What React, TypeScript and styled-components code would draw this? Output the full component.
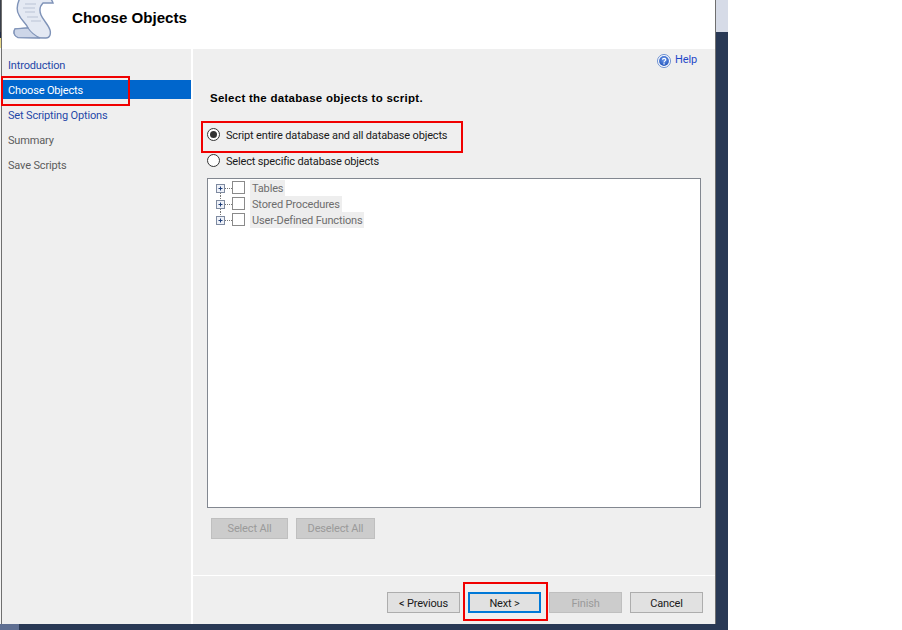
import styled, { createGlobalStyle } from 'styled-components';

const GlobalStyle = createGlobalStyle`
  html, body {
    margin: 0;
    padding: 0;
    background: #ffffff;
  }
  body {
    font-family: Roboto, 'Liberation Sans', Arial, sans-serif;
    font-size: 11px;
    letter-spacing: -0.16px;
    overflow: hidden;
  }
`;

const Desktop = styled.div`
  position: relative;
  width: 728px;
  height: 630px;
  display: flex;
  flex-direction: column;
  background: #293955;
`;

const Upper = styled.div`
  display: flex;
  height: 624px;
`;

const LeftSliver = styled.div`
  width: 1px;
  background: linear-gradient(#3a3f4a 0 32px, #1f2a44 32px 38px, #e8d98a 38px 48px, #f4f4f4 48px);
`;

const RightStrip = styled.div`
  width: 12px;
  display: flex;
  flex-direction: column;
`;

const RightStripTop = styled.div`
  height: 32px;
  background: #d6dbe7;
`;

const BottomStrip = styled.div`
  height: 6px;
  display: flex;
`;

const BottomStripLeft = styled.div`
  width: 19px;
  background: #5f6f92;
`;

const Window = styled.div`
  width: 714px;
  display: flex;
  flex-direction: column;
  border-left: 1px solid #6f6f6f;
  border-right: 1px solid #6f6f6f;
  background: #efefef;
`;

const Header = styled.header`
  height: 49px;
  flex: none;
  display: flex;
  align-items: flex-start;
  background: #ffffff;
  overflow: hidden;
`;

const ScrollIcon = styled.svg`
  width: 44px;
  height: 42px;
  margin-left: 10px;
  flex: none;
`;

const Title = styled.h1`
  margin: 9px 0 0 16px;
  font-family: 'Liberation Sans', Arial, sans-serif;
  font-size: 15.1px;
  line-height: 18px;
  font-weight: 700;
  letter-spacing: 0;
  color: #000000;
`;

const Body = styled.div`
  flex: 1;
  display: flex;
  min-height: 0;
`;

const Sidebar = styled.nav`
  width: 189px;
  flex: none;
  display: flex;
  flex-direction: column;
  gap: 6px;
  padding-top: 6px;
  border-right: 2px solid #ffffff;
`;

const NavItem = styled.div<{ $state: 'link' | 'active' | 'muted' }>`
  height: 19px;
  line-height: 21px;
  padding-left: 6px;
  background: ${(p) => (p.$state === 'active' ? '#0066cc' : 'transparent')};
  color: ${(p) =>
    p.$state === 'active' ? '#ffffff' : p.$state === 'link' ? '#1f48a8' : '#5c5c5c'};
`;

const Main = styled.main`
  flex: 1;
  display: flex;
  flex-direction: column;
  min-width: 0;
`;

const Content = styled.section`
  height: 527px;
  flex: none;
  display: flex;
  flex-direction: column;
  padding-left: 14px;
  box-sizing: border-box;
  border-bottom: 1px solid #ffffff;
`;

const HelpRow = styled.div`
  height: 18px;
  padding-right: 18px;
  display: flex;
  justify-content: flex-end;
  align-items: flex-end;
  gap: 4px;
  line-height: 14px;
  color: #1f48c8;
`;

const HelpIcon = styled.svg`
  width: 14px;
  height: 14px;
  margin-bottom: -1px;
`;

const Heading = styled.h2`
  margin: 24px 0 0 3px;
  height: 14px;
  font-family: 'Liberation Sans', Arial, sans-serif;
  font-size: 11.5px;
  line-height: 14px;
  font-weight: 700;
  letter-spacing: 0.27px;
  color: #000000;
`;

const RadioRow = styled.label<{ $top: number }>`
  display: flex;
  align-items: center;
  gap: 6px;
  height: 14px;
  margin-top: ${(p) => p.$top}px;
  color: #1a1a1a;
`;

const Radio = styled.span<{ $checked?: boolean }>`
  width: 13px;
  height: 13px;
  margin-top: -1px;
  flex: none;
  border-radius: 50%;
  box-sizing: border-box;
  border: 1px solid #333333;
  background: #ffffff;
  display: flex;
  align-items: center;
  justify-content: center;
  &::after {
    content: '';
    width: 7px;
    height: 7px;
    border-radius: 50%;
    background: ${(p) => (p.$checked ? '#333333' : 'transparent')};
  }
`;

const TreeBox = styled.div`
  width: 494px;
  height: 330px;
  margin-top: 10px;
  box-sizing: border-box;
  padding-top: 1px;
  border: 1px solid #828790;
  background: #ffffff;
  display: flex;
  flex-direction: column;
`;

const TreeRow = styled.div`
  height: 16px;
  display: flex;
  align-items: center;
`;

const TreeGlyph = styled.svg`
  width: 17px;
  height: 16px;
  margin-left: 7px;
  flex: none;
`;

const Check = styled.span`
  width: 13px;
  height: 13px;
  margin-top: -1px;
  flex: none;
  box-sizing: border-box;
  border: 1px solid #8a8a8a;
  background: #ffffff;
`;

const TreeLabel = styled.span`
  height: 16px;
  line-height: 18px;
  margin-left: 5px;
  padding: 0 2px;
  background: #eeeeee;
  color: #6d6d6d;
`;

const SelectBar = styled.div`
  display: flex;
  gap: 8px;
  margin: 10px 0 0 4px;
`;

const Button = styled.button<{ $width: number; $focused?: boolean }>`
  width: ${(p) => p.$width}px;
  height: 21px;
  padding: 0;
  box-sizing: border-box;
  font-family: inherit;
  font-size: 11px;
  letter-spacing: -0.16px;
  color: #1a1a1a;
  background: #e1e1e1;
  border: ${(p) => (p.$focused ? '2px solid #0078d7' : '1px solid #adadad')};
  &:disabled {
    color: #9a9a9a;
    background: #cccccc;
    border-color: #bfbfbf;
  }
`;

const Footer = styled.footer`
  flex: 1;
  display: flex;
  justify-content: flex-end;
  gap: 8px;
  padding: 16px 12px 0 0;
  button {
    padding-top: 1px;
  }
`;

const Callout = styled.div<{ $x: number; $y: number; $w: number; $h: number }>`
  position: absolute;
  left: ${(p) => p.$x}px;
  top: ${(p) => p.$y}px;
  width: ${(p) => p.$w}px;
  height: ${(p) => p.$h}px;
  box-sizing: border-box;
  border: 2px solid #f00000;
  pointer-events: none;
`;

const NAV: { label: string; state: 'link' | 'active' | 'muted' }[] = [
  { label: 'Introduction', state: 'link' },
  { label: 'Choose Objects', state: 'active' },
  { label: 'Set Scripting Options', state: 'link' },
  { label: 'Summary', state: 'muted' },
  { label: 'Save Scripts', state: 'muted' },
];

const TREE = ['Tables', 'Stored Procedures', 'User-Defined Functions'];

const Scroll = () => (
  <ScrollIcon viewBox="12 0 44 42">
    <path
      d="M20 -2 C17 4 16 10 19 15 C21 20 26 23 28 28 L15 29 C13 32 14 36 18 37.5 L46 38 C50 38 51 34 50 30 C48 24 43 20 41 15 C39 10 40 6 43 3 L53 3 C52 0 50 -2 50 -2 Z"
      fill="#e4e9f3"
      stroke="#7f93b8"
      strokeWidth="1.4"
    />
    <path
      d="M15 29 L28 28 C30 31 33 35 40 37.8 L18 37.5 C14 36 13 32 15 29 Z"
      fill="#cdd6e8"
      stroke="#7f93b8"
      strokeWidth="1.2"
    />
    <path d="M25 4 H36 M23 8 H35 M25 12 H35 M27 17 H38 M31 21 H41" stroke="#b9c3d6" strokeWidth="1.2" fill="none" />
  </ScrollIcon>
);

const Help = () => (
  <HelpIcon viewBox="0 0 14 14">
    <defs>
      <radialGradient id="helpBall" cx="0.5" cy="0.35" r="0.7">
        <stop offset="0" stopColor="#6f9bec" />
        <stop offset="1" stopColor="#1c4fb8" />
      </radialGradient>
    </defs>
    <circle cx="7" cy="7" r="6.5" fill="#ffffff" stroke="#6b8fd0" />
    <circle cx="7" cy="7" r="4.9" fill="url(#helpBall)" />
    <path d="M5.4 5.6 C5.5 4.1 8.8 4 8.8 5.7 C8.8 6.9 7 6.9 7 8.4" fill="none" stroke="#ffffff" strokeWidth="1.2" />
    <rect x="6.4" y="9.2" width="1.3" height="1.3" fill="#ffffff" />
  </HelpIcon>
);

const Expander = ({ last, first }: { last: boolean; first: boolean }) => (
  <TreeGlyph viewBox="0 0 17 16">
    {!first && <path d="M5.5 0 V3" stroke="#777" strokeDasharray="1 1" />}
    {!last && <path d="M5.5 13 V16" stroke="#777" strokeDasharray="1 1" />}
    <path d="M10 8.5 H17" stroke="#777" strokeDasharray="1 1" />
    <rect x="1.5" y="4.5" width="8" height="8" fill="#eef1f8" stroke="#7e8aa0" />
    <path d="M3.5 8.5 H7.5 M5.5 6.5 V10.5" stroke="#1f3f7a" />
  </TreeGlyph>
);

const App = () => {
  return (
    <>
      <GlobalStyle />
      <Desktop>
        <Upper>
          <LeftSliver />
          <Window>
            <Header>
              <Scroll />
              <Title>Choose Objects</Title>
            </Header>
            <Body>
              <Sidebar>
                {NAV.map((item) => (
                  <NavItem key={item.label} $state={item.state}>
                    {item.label}
                  </NavItem>
                ))}
              </Sidebar>
              <Main>
                <Content>
                  <HelpRow>
                    <Help />
                    <span>Help</span>
                  </HelpRow>
                  <Heading>Select the database objects to script.</Heading>
                  <RadioRow $top={23}>
                    <Radio $checked />
                    Script entire database and all database objects
                  </RadioRow>
                  <RadioRow $top={12}>
                    <Radio />
                    Select specific database objects
                  </RadioRow>
                  <TreeBox>
                    {TREE.map((label, i) => (
                      <TreeRow key={label}>
                        <Expander first={i === 0} last={i === TREE.length - 1} />
                        <Check />
                        <TreeLabel>{label}</TreeLabel>
                      </TreeRow>
                    ))}
                  </TreeBox>
                  <SelectBar>
                    <Button $width={77} disabled>
                      Select All
                    </Button>
                    <Button $width={79} disabled>
                      Deselect All
                    </Button>
                  </SelectBar>
                </Content>
                <Footer>
                  <Button $width={73}>&lt; Previous</Button>
                  <Button $width={73} $focused>
                    Next &gt;
                  </Button>
                  <Button $width={73} disabled>
                    Finish
                  </Button>
                  <Button $width={73}>Cancel</Button>
                </Footer>
              </Main>
            </Body>
          </Window>
          <RightStrip>
            <RightStripTop />
          </RightStrip>
        </Upper>
        <BottomStrip>
          <BottomStripLeft />
        </BottomStrip>
        <Callout $x={1} $y={76} $w={129} $h={30} />
        <Callout $x={201} $y={121} $w={262} $h={32} />
        <Callout $x={463} $y={582} $w={85} $h={39} />
      </Desktop>
    </>
  );
};

export default App;
